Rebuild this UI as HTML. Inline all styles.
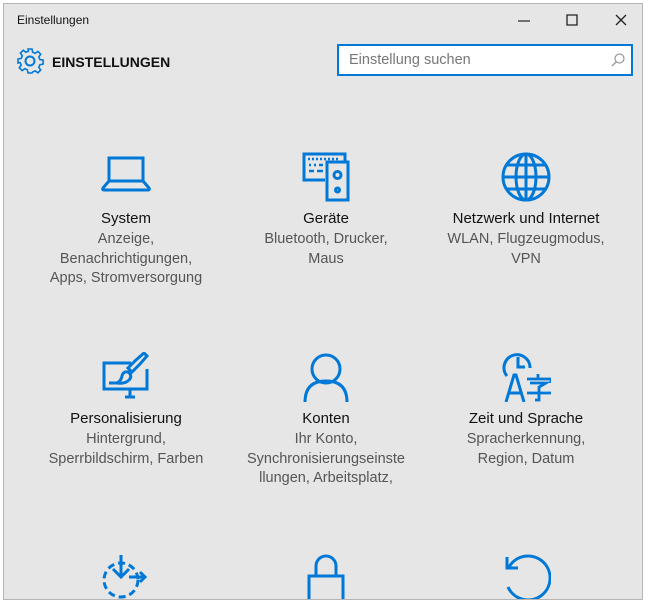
<!DOCTYPE html><html><head><style>
body{margin:0;width:649px;height:606px;background:#fff;overflow:hidden;font-family:"Liberation Sans",sans-serif}
.win{position:absolute;left:3px;top:3px;width:640px;height:597px;background:#e6e6e6;border:1px solid #b5b5b5;box-sizing:border-box;overflow:hidden}
.t{position:absolute;left:13px;top:9px;font-size:12px;color:#111}
.hd{position:absolute;left:48px;top:50px;font-size:14px;font-weight:bold;color:#111}
.sr{position:absolute;left:333px;top:40px;width:296px;height:32px;border:2px solid #0078d7;background:#fff;box-sizing:border-box}
.sr span{position:absolute;left:10px;top:6px;font-size:14.5px;color:#777}
.it{position:absolute;width:200px;text-align:center}
.it svg{display:block;margin:0 auto}
.n{font-size:15px;color:#111;margin-top:7px;line-height:20px}
.d{font-size:14.5px;color:#555;line-height:19.5px;margin-top:1px}
svg *{fill:none;stroke:#0078d7;stroke-width:3}
</style></head><body><div class="win">
<div class="t">Einstellungen</div>
<svg style="position:absolute;left:512px;top:10px" width="130" height="14"><path d="M2 7h12" style="stroke:#222;stroke-width:1.2"/><path d="M51 1h10v10H51z" style="stroke:#222;stroke-width:1.3"/><path d="M100 1l10 10M110 1l-10 10" style="stroke:#222;stroke-width:1.3"/></svg>
<svg style="position:absolute;left:12px;top:43px" width="28" height="28" viewBox="0 0 28 28"><circle cx="14" cy="14" r="4.5" style="stroke-width:2"/><path d="M12 2h4l.6 3.2 2.6 1.1 2.7-1.9 2.8 2.8-1.9 2.7 1.1 2.6 3.2.6v4l-3.2.6-1.1 2.6 1.9 2.7-2.8 2.8-2.7-1.9-2.6 1.1L16 26h-4l-.6-3.2-2.6-1.1-2.7 1.9-2.8-2.8 1.9-2.7-1.1-2.6L2 16v-4l3.2-.6 1.1-2.6-1.9-2.7 2.8-2.8 2.7 1.9 2.6-1.1z" style="stroke-width:1.6"/></svg>
<div class="hd">EINSTELLUNGEN</div>
<div class="sr"><span>Einstellung suchen</span><svg style="position:absolute;right:6px;top:7px" width="14" height="14"><circle cx="8.5" cy="5.5" r="4.5" style="stroke:#999;stroke-width:1.2"/><path d="M5.5 8.5L1 13" style="stroke:#999;stroke-width:1.4"/></svg></div>

<div class="it" style="left:22px;top:148px"><svg width="50" height="50" viewBox="0 0 50 50"><path d="M8 6h34v23H8z"/><path d="M8 29L2 36q-1 2 1 2h44q2 0 1-2l-6-7"/></svg><div class="n">System</div><div class="d">Anzeige,<br>Benachrichtigungen,<br>Apps, Stromversorgung</div></div>
<div class="it" style="left:222px;top:148px"><svg width="50" height="50" viewBox="0 0 50 50"><path d="M24 28H3V2h41v8"/><path d="M26 10h21v38H26z"/><circle cx="36.5" cy="23" r="3.5"/><circle cx="36.5" cy="38" r="2"/><path d="M7 7h2M11 7h2M15 7h2M19 7h2M23 7h2M27 7h2M31 7h2M35 7h2M8 13h2M13 13h2M18 13h4M8 19h5M16 19h6" style="stroke-width:2.5"/></svg><div class="n">Geräte</div><div class="d">Bluetooth, Drucker,<br>Maus</div></div>
<div class="it" style="left:422px;top:148px"><svg width="50" height="50" viewBox="0 0 50 50"><circle cx="25" cy="25" r="23"/><ellipse cx="25" cy="25" rx="10" ry="23"/><path d="M25 2v46M2 25h46M6 13h38M6 37h38"/></svg><div class="n">Netzwerk und Internet</div><div class="d">WLAN, Flugzeugmodus,<br>VPN</div></div>

<div class="it" style="left:22px;top:348px"><svg width="50" height="50" viewBox="0 0 50 50"><path d="M30 11H3v26h43V17"/><path d="M24 45h10M29 37v8M8 31h10"/><path d="M35 8l8-7 3 3-7 8-8 8-4-4z"/><path d="M27 20q-5-1-6 4t-5 7q8 1 12-3t-1-8z"/></svg><div class="n">Personalisierung</div><div class="d">Hintergrund,<br>Sperrbildschirm, Farben</div></div>
<div class="it" style="left:222px;top:348px"><svg width="50" height="50" viewBox="0 0 50 50"><circle cx="25" cy="17" r="14"/><path d="M4 50q0-21 21-21t21 21"/></svg><div class="n">Konten</div><div class="d">Ihr Konto,<br>Synchronisierungseinste<br>llungen, Arbeitsplatz,</div></div>
<div class="it" style="left:422px;top:348px"><svg width="50" height="50" viewBox="0 0 50 50"><path d="M6 24A13 13 0 1 1 29 16"/><path d="M17 5v10h7"/><path d="M5 50l8-27h2l8 27M8 41h12"/><path d="M37 22v4M26 27h24v4M29 31h16l-7 4v13h-4M26 41h24" style="stroke-width:2.8"/></svg><div class="n">Zeit und Sprache</div><div class="d">Spracherkennung,<br>Region, Datum</div></div>

<div class="it" style="left:22px;top:548px"><svg width="50" height="50" viewBox="0 0 50 50"><circle cx="20" cy="28" r="17" stroke-dasharray="7 4"/><path d="M20 3v22M12 17l8 8 8-8"/><path d="M28 25h16M39 20l5 5-5 5"/></svg></div>
<div class="it" style="left:222px;top:548px"><svg width="50" height="50" viewBox="0 0 50 50"><path d="M15 24V14a10 10 0 0 1 20 0v10M8 24h34v26H8z"/></svg></div>
<div class="it" style="left:422px;top:548px"><svg width="50" height="50" viewBox="0 0 50 50"><path d="M8 15A22 22 0 1 1 7 35"/><path d="M6 5v11h11"/></svg></div>
</div></body></html>
